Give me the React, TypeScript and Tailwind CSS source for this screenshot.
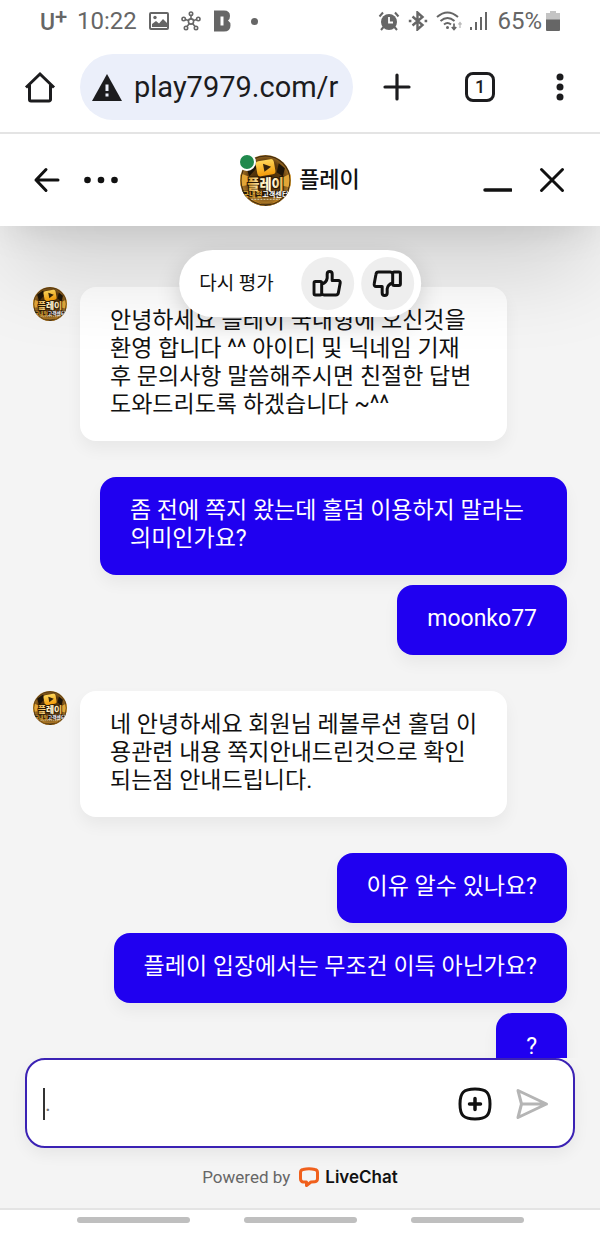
import type { ReactNode } from "react";
import clsx from "clsx";

type Message = {
  from: "agent" | "user";
  lines: string[];
};

const MESSAGES: Message[] = [
  {
    from: "agent",
    lines: [
      "안녕하세요 플레이 국내형에 오신것을 환영 합니다 ^^ 아이디 및 닉네임 기재 후 문의사항 말씀해주시면 친절한 답변 도와드리도록 하겠습니다 ~^^",
    ],
  },
  {
    from: "user",
    lines: ["좀 전에 쪽지 왔는데 홀덤 이용하지 말라는 의미인가요?", "moonko77"],
  },
  {
    from: "agent",
    lines: [
      "네 안녕하세요 회원님 레볼루션 홀덤 이용관련 내용 쪽지안내드린것으로 확인되는점 안내드립니다.",
    ],
  },
  {
    from: "user",
    lines: ["이유 알수 있나요?", "플레이 입장에서는 무조건 이득 아닌가요?", "?"],
  },
];

function StatusBar() {
  return (
    <div className="flex h-[42px] shrink-0 items-center justify-between pl-10 pr-10 text-2xl text-[#666]">
      <div className="flex items-center">
        <span className="flex w-[37px] items-end text-[23px] leading-6 font-medium">
          U<span className="pb-2 text-[22px] leading-5">+</span>
        </span>
        <span>10:22</span>
        <svg className="ml-3 h-5 w-5" viewBox="0 0 20 20" fill="none">
          <rect x="1" y="2" width="18" height="16" rx="1" stroke="currentColor" strokeWidth="2" />
          <circle cx="6" cy="6.5" r="1.7" fill="currentColor" />
          <path d="M3 16v-3l4-3 3 2.5L14 8l4 4v4z" fill="currentColor" />
        </svg>
        <svg className="ml-3 h-5 w-5" viewBox="0 0 20 20" fill="none" stroke="currentColor" strokeWidth="1.6">
          <circle cx="10" cy="10.5" r="2.6" />
          <circle cx="10" cy="2.7" r="1.7" />
          <circle cx="2.7" cy="8" r="1.7" />
          <circle cx="17.3" cy="8" r="1.7" />
          <circle cx="5" cy="17" r="1.7" />
          <circle cx="15" cy="17" r="1.7" />
          <path d="M10 4.4v3.500M4.400 8.600l3 1M15.600 8.600l-3 1M6 15.600l2.400-3M14 15.600l-2.400-3" />
        </svg>
        <svg className="ml-3 h-[22px] w-[18px]" viewBox="0 0 18 22">
          <path
            fill="currentColor"
            fillRule="evenodd"
            d="M1 0.500h10q6 0 6 5.500 0 3.500-2 4.500 2.500 1.500 2.500 5 0 6-6.500 6H1zM7.500 6.500v9h3v-9z"
          />
        </svg>
        <span className="ml-5 h-[7px] w-[7px] rounded-full bg-[#666]" />
      </div>

      <div className="flex items-center">
        <svg className="h-5 w-[22px]" viewBox="0 0 22 20" fill="none" stroke="currentColor">
          <circle cx="11" cy="11" r="8" fill="currentColor" stroke="none" />
          <path d="M1.500 5.500L5 1.500M20.500 5.500L17 1.500" strokeWidth="2" />
          <path d="M5.500 16L3 19M16.500 16l2.500 3" strokeWidth="2" />
          <path d="M11 6v5.500h4" stroke="#fff" strokeWidth="1.800" />
        </svg>
        <svg className="ml-2 h-5 w-5" viewBox="0 0 20 20" fill="none" stroke="currentColor" strokeWidth="2.400">
          <path d="M4.500 5.500l10 8.500-5 4.500v-17l5 4.500-10 8.500" />
          <path d="M0.800 10h2.600M16.600 10h2.600" />
        </svg>
        <svg className="ml-2 h-5 w-[27px]" viewBox="0 0 27 20" fill="none" stroke="currentColor" strokeWidth="2">
          <path d="M1 6q10.500-9 21 0M4.500 10q7-6 14 0M8 13.500q3.500-3 7 0" />
          <circle cx="11.500" cy="16.500" r="1.500" fill="currentColor" stroke="none" />
          <path d="M18 12.500v6M15.800 16l2.200 2.500 2.200-2.500" strokeWidth="1.700" />
          <path d="M24 17v-5M22.500 13.500l1.500-2 1.500 2" stroke="#bbb" strokeWidth="1.300" />
        </svg>
        <svg className="ml-[6px] h-5 w-5" viewBox="0 0 20 20" fill="currentColor">
          <path d="M1 16h2v3H1zM6 11h2v8H6zM11 6h2v13h-2zM16 1h2v18h-2z" />
        </svg>
        <span className="ml-2">65%</span>
        <svg className="ml-1 h-5 w-[14px]" viewBox="0 0 14 20">
          <path d="M4 0h6v2h4v7H0V2h4z" fill="#c4c4c4" />
          <path d="M0 8.500h14V19q0 1-1 1H1q-1 0-1-1z" fill="#666" />
        </svg>
      </div>
    </div>
  );
}

function BrowserBar() {
  return (
    <div className="flex h-[92px] shrink-0 items-center border-b-2 border-[#e4e4e4] text-[#1c1c1e]">
      <button type="button" aria-label="Home" className="flex w-20 justify-center">
        <svg className="h-8 w-8" viewBox="0 0 32 32" fill="none" stroke="currentColor" strokeWidth="3">
          <path d="M2 16.500L16 3l14 13.500" />
          <path d="M5.500 14v14.500a1.500 1.500 0 0 0 1.500 1.500h18a1.500 1.500 0 0 0 1.500-1.500V14" />
        </svg>
      </button>
      <label className="flex h-[66px] min-w-0 flex-1 items-center rounded-full bg-[#ebeffa] pl-3 pr-3">
        <svg className="h-[27px] w-[30px] shrink-0" viewBox="0 0 30 27">
          <path d="M15 0l15 27H0z" fill="currentColor" />
          <path d="M13.500 10.500h3v6.500h-3zM13.500 19.500h3v3h-3z" fill="#ebeffa" />
        </svg>
        <input
          aria-label="Address"
          className="ml-3 w-full min-w-0 bg-transparent text-[29px] leading-9 outline-none"
          defaultValue="play7979.com/r"
        />
      </label>
      <button type="button" aria-label="New tab" className="flex w-[87px] justify-center">
        <svg className="h-7 w-7" viewBox="0 0 28 28" stroke="currentColor" strokeWidth="3.200" strokeLinecap="round">
          <path d="M14 2v24M2 14h24" />
        </svg>
      </button>
      <button type="button" aria-label="Tabs" className="flex w-20 justify-center">
        <span className="flex h-[30px] w-[30px] items-center justify-center rounded-lg border-[3px] border-[#1c1c1e] text-lg font-medium">
          1
        </span>
      </button>
      <button type="button" aria-label="Menu" className="flex w-20 justify-center">
        <svg className="h-7 w-2" viewBox="0 0 8 28" fill="currentColor">
          <circle cx="4" cy="4" r="3.500" />
          <circle cx="4" cy="14" r="3.500" />
          <circle cx="4" cy="24" r="3.500" />
        </svg>
      </button>
    </div>
  );
}

function Avatar({ className }: { className?: string }) {
  return (
    <svg className={clsx("shrink-0", className)} viewBox="0 0 50 50" aria-hidden="true">
      <defs>
        <radialGradient id="coin" cx="50%" cy="45%" r="55%">
          <stop offset="0%" stopColor="#3a2408" />
          <stop offset="60%" stopColor="#5f3b0d" />
          <stop offset="88%" stopColor="#a87526" />
          <stop offset="100%" stopColor="#46300f" />
        </radialGradient>
        <linearGradient id="card" x1="0" y1="0" x2="0" y2="1">
          <stop offset="0%" stopColor="#ffd75a" />
          <stop offset="100%" stopColor="#f29a08" />
        </linearGradient>
        <linearGradient id="gold" x1="0" y1="0" x2="1" y2="0">
          <stop offset="0%" stopColor="#d9951f" />
          <stop offset="35%" stopColor="#fff0bd" />
          <stop offset="70%" stopColor="#fffbe6" />
          <stop offset="100%" stopColor="#e8ad32" />
        </linearGradient>
        <clipPath id="disc">
          <circle cx="25" cy="25" r="25" />
        </clipPath>
      </defs>
      <g clipPath="url(#disc)">
        <rect width="50" height="50" fill="url(#coin)" />
        <path d="M0 18l14 5-3 6L0 31zM50 18l-12 6 3 6 9 2z" fill="#e2a637" />
        <path d="M6 11l9-6 1 8-7 8zM38 8l6 5-2 8-6-4z" fill="#1d1408" />
        <path d="M8 42l8 3 9 5H8zM42 42l-8 3-7 5h14z" fill="#ba7d1f" />
        <circle cx="25" cy="25" r="24" fill="none" stroke="#3f2b10" />
        <rect x="16" y="5" width="18" height="15" rx="3" fill="url(#card)" transform="rotate(-10 25 12)" />
        <path d="M22.500 8.500l8 3-6.500 5z" fill="#33230a" />
        <path d="M0 35h50v6H0z" fill="#241607" />
        <text
          x="25"
          y="33"
          textAnchor="middle"
          fontSize="13"
          fontWeight="900"
          fill="url(#gold)"
          stroke="#281704"
          strokeWidth="2"
          paintOrder="stroke"
        >
          플레이
        </text>
        <text x="25" y="41" textAnchor="middle" fontSize="7" fontWeight="700">
          <tspan fill="#e3ad3c">국내형</tspan>
          <tspan fill="#ffffff">고객센터</tspan>
        </text>
        <path d="M11 43.500h28" stroke="#cdbb91" strokeDasharray="2 1" />
      </g>
    </svg>
  );
}

function ChatHeader() {
  return (
    <header className="relative z-10 flex h-[92px] shrink-0 items-center justify-between bg-white px-8 text-[#111] shadow-[0_48px_90px_-12px_rgba(0,0,0,0.18),0_6px_40px_-8px_rgba(0,0,0,0.16)]">
      <div className="flex w-[100px] items-center gap-5">
        <button type="button" aria-label="Back">
          <svg
            className="h-[30px] w-[30px]"
            viewBox="0 0 30 30"
            fill="none"
            stroke="currentColor"
            strokeWidth="3"
            strokeLinecap="round"
            strokeLinejoin="round"
          >
            <path d="M26 15H4M14 4.500L4 15l10 10.500" />
          </svg>
        </button>
        <button type="button" aria-label="More">
          <svg className="h-2 w-9" viewBox="0 0 36 8" fill="currentColor">
            <circle cx="5.500" cy="4" r="3.300" />
            <circle cx="19" cy="4" r="3.300" />
            <circle cx="32.500" cy="4" r="3.300" />
          </svg>
        </button>
      </div>
      <div className="flex items-center gap-2">
        <div className="relative">
          <Avatar className="h-[51px] w-[51px]" />
          <span className="absolute -left-[2px] -top-[2px] h-[18px] w-[18px] rounded-full border-2 border-white bg-[#20894d]" />
        </div>
        <h1 className="text-[22px] leading-7 font-medium">플레이</h1>
      </div>
      <div className="flex w-[100px] items-center justify-end gap-6">
        <button type="button" aria-label="Minimize">
          <svg className="h-[30px] w-[30px]" viewBox="0 0 30 30" stroke="currentColor" strokeWidth="3.500" strokeLinecap="round">
            <path d="M3 25h26" />
          </svg>
        </button>
        <button type="button" aria-label="Close">
          <svg className="h-8 w-8" viewBox="0 0 32 32" stroke="currentColor" strokeWidth="3" strokeLinecap="round">
            <path d="M5.500 5.500l21 21M26.500 5.500l-21 21" />
          </svg>
        </button>
      </div>
    </header>
  );
}

function Thumb({ className }: { className?: string }) {
  return (
    <svg
      className={clsx("h-[27px] w-[30px]", className)}
      viewBox="0 0 30 27"
      fill="none"
      stroke="currentColor"
      strokeWidth="3"
      strokeLinejoin="round"
    >
      <rect x="1.800" y="11.500" width="7.700" height="13.500" rx="1.500" />
      <path d="M9.500 14q5-1.500 5.500-6V4a2.500 2.500 0 0 1 5 0v6.500h6a2 2 0 0 1 2 2.500l-1.800 9.800a2.600 2.600 0 0 1-2.600 2.200H12q-1.500 0-2.500-1.500" />
    </svg>
  );
}

function RateButton({ label, children }: { label: string; children: ReactNode }) {
  return (
    <button
      type="button"
      aria-label={label}
      className="flex h-[53px] w-[53px] items-center justify-center rounded-full bg-[#eee]"
    >
      {children}
    </button>
  );
}

function RatingPill() {
  return (
    <div className="absolute left-1/2 top-6 z-20 flex h-[67px] -translate-x-1/2 items-center gap-[7px] rounded-full bg-white pl-5 pr-[7px] text-[#111] shadow-[0_8px_24px_rgba(0,0,0,0.16)]">
      <span className="mr-5 text-[19px] leading-6 whitespace-nowrap">다시 평가</span>
      <RateButton label="좋아요">
        <Thumb />
      </RateButton>
      <RateButton label="싫어요">
        <Thumb className="rotate-180" />
      </RateButton>
    </div>
  );
}

function MessageGroup({ from, lines }: Message) {
  const isUser = from === "user";
  return (
    <div className={clsx("flex", isUser ? "justify-end" : "items-start gap-[13px]")}>
      {!isUser && <Avatar className="h-[34px] w-[34px]" />}
      <div className={clsx("flex flex-col gap-[10px]", isUser && "items-end")}>
        {lines.map((line) => (
          <p
            key={line}
            className={clsx(
              "rounded-2xl pt-5 pb-[22px] pl-[30px] text-[23px] leading-7 shadow-[0_8px_16px_rgba(0,0,0,0.05)]",
              isUser ? "max-w-[467px] bg-[#2000f0] pr-[30px] text-white" : "max-w-[427px] bg-white pr-6 text-[#111]"
            )}
          >
            {line}
          </p>
        ))}
      </div>
    </div>
  );
}

function Composer() {
  return (
    <form className="mx-[25px] flex h-[90px] shrink-0 items-center rounded-[20px] border-2 border-[#3b22b4] bg-white pt-[2px] pl-4 pr-6 shadow-[0_6px_16px_rgba(0,0,0,0.06)]">
      <span className="h-8 w-[2px] bg-[#333]" />
      <input
        aria-label="Message"
        placeholder="."
        className="min-w-0 flex-1 text-[22px] leading-7 outline-none placeholder:text-[#777]"
      />
      <button type="button" aria-label="Attach" className="mr-[23px] text-[#111]">
        <svg className="h-[34px] w-[34px]" viewBox="0 0 34 34" fill="none" stroke="currentColor" strokeWidth="3" strokeLinecap="round">
          <path d="M17 2c11.500 0 15 3.500 15 15s-3.500 15-15 15S2 28.500 2 17 5.500 2 17 2z" />
          <path d="M17 11.500v11M11.500 17h11" strokeWidth="3.500" />
        </svg>
      </button>
      <button type="submit" aria-label="Send" className="text-[#b5b5b5]">
        <svg className="h-8 w-[34px]" viewBox="0 0 34 32" fill="none" stroke="currentColor" strokeWidth="3" strokeLinejoin="round">
          <path d="M3 2.500L31.500 16 3 29.500 6.500 16zM6.500 16h24" />
        </svg>
      </button>
    </form>
  );
}

export default function App() {
  return (
    <div className="flex h-screen flex-col bg-white font-[Roboto,'Noto_Sans_CJK_KR',sans-serif]">
      <StatusBar />
      <BrowserBar />
      <main className="flex min-h-0 flex-1 flex-col overflow-hidden bg-[#f4f4f4]">
        <ChatHeader />
        <div className="relative flex min-h-0 flex-1 flex-col">
          <RatingPill />
          <section className="flex flex-1 flex-col gap-9 overflow-y-auto px-[33px] pt-[61px] [scrollbar-width:none]">
            {MESSAGES.map((m, i) => (
              <MessageGroup key={i} {...m} />
            ))}
          </section>
        </div>
        <Composer />
        <footer className="flex h-[60px] shrink-0 items-center justify-center pb-[2px] text-[17px] leading-6 text-[#666]">
          Powered by
          <a href="#livechat" className="ml-[9px] flex items-center gap-[6px] font-[Inter] font-semibold text-[#111]">
            <svg className="h-5 w-5" viewBox="0 0 20 20" fill="none" stroke="#f0601c" strokeWidth="3" strokeLinejoin="round">
              <path d="M4 2.500Q10 1 16 2.500q2.500 0.500 2.500 3v6q0 3-2.500 3.200L12 15l-4.500 3.500V15H4q-2.500-0.500-2.500-3.500v-6q0-2.500 2.500-3z" />
            </svg>
            LiveChat
          </a>
        </footer>
      </main>
      <nav className="flex h-[25px] shrink-0 justify-center gap-[54px] border-t-2 border-[#e4e4e4] pt-[7px]">
        {["Recents", "Home", "Back"].map((label) => (
          <button key={label} type="button" aria-label={label} className="h-[6px] w-[113px] rounded-full bg-[#bfbfbf]" />
        ))}
      </nav>
    </div>
  );
}
